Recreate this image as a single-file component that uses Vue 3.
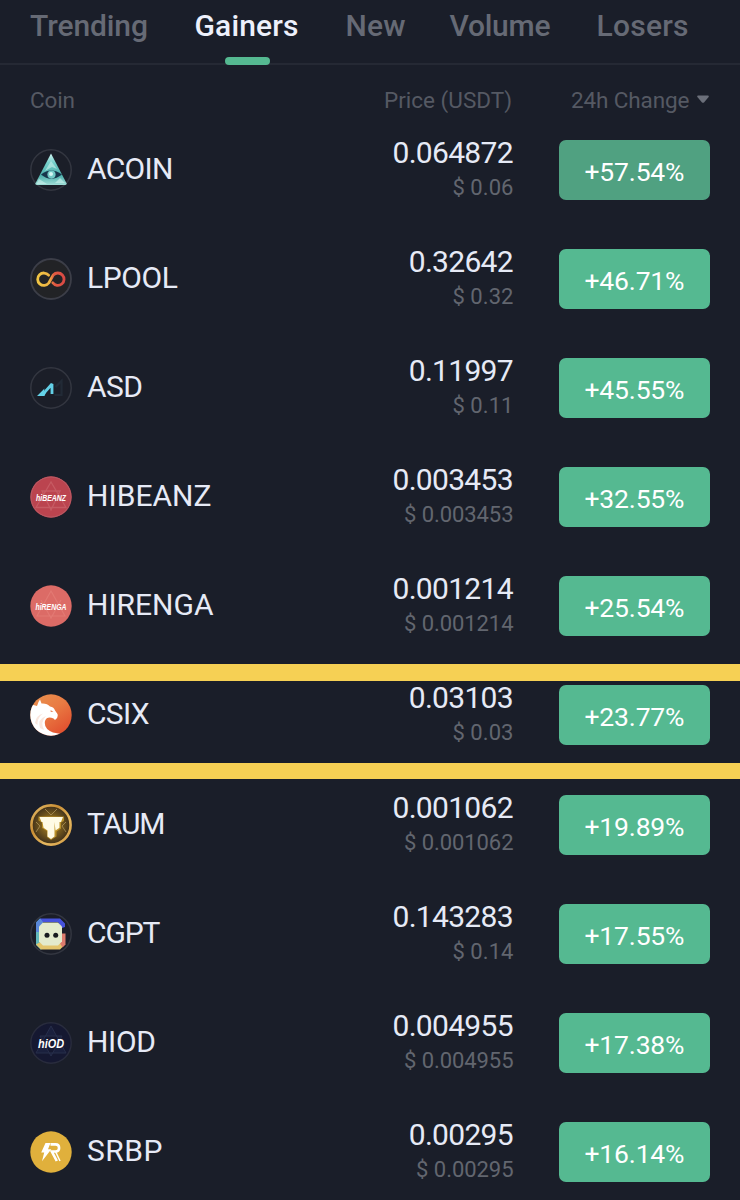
<script setup>
// Spreads the letters of an element so that its text spans the given width.
const vFit = {
  mounted(el, { value }) {
    const count = el.textContent.trim().length
    const natural = el.getBoundingClientRect().width
    const spacing = (value - natural) / (count - 1)
    el.style.letterSpacing = `${spacing}px`
    el.style.marginRight = `${-spacing}px`
  },
}

const tabs = [
  { label: 'Trending', width: 118 },
  { label: 'Gainers', width: 104, active: true },
  { label: 'New', width: 60 },
  { label: 'Volume', width: 101 },
  { label: 'Losers', width: 92 },
]

const coins = [
  { name: 'ACOIN', width: 86.5, price: '0.064872', usd: '$ 0.06', change: '+57.54%', pressed: true },
  { name: 'LPOOL', width: 91, price: '0.32642', usd: '$ 0.32', change: '+46.71%' },
  { name: 'ASD', width: 56, price: '0.11997', usd: '$ 0.11', change: '+45.55%' },
  { name: 'HIBEANZ', width: 124.5, price: '0.003453', usd: '$ 0.003453', change: '+32.55%' },
  { name: 'HIRENGA', width: 126.5, price: '0.001214', usd: '$ 0.001214', change: '+25.54%' },
  { name: 'CSIX', width: 62.5, price: '0.03103', usd: '$ 0.03', change: '+23.77%', marked: true },
  { name: 'TAUM', width: 78.5, price: '0.001062', usd: '$ 0.001062', change: '+19.89%' },
  { name: 'CGPT', width: 73.5, price: '0.143283', usd: '$ 0.14', change: '+17.55%' },
  { name: 'HIOD', width: 69, price: '0.004955', usd: '$ 0.004955', change: '+17.38%' },
  { name: 'SRBP', width: 75.5, price: '0.00295', usd: '$ 0.00295', change: '+16.14%' },
]

const priceWidth = (t) => 121 - (8 - t.length) * 16.3
const usdWidth = (t) => 109.5 - (10 - t.length) * 12.1
</script>

<template>
  <main class="market">
    <nav class="tabs">
      <a v-for="t in tabs" :key="t.label" class="tab" :class="{ active: t.active }">
        <span v-fit="t.width">{{ t.label }}</span>
      </a>
    </nav>
    <header class="columns">
      <div class="col-coin"><span v-fit="45">Coin</span></div>
      <div class="col-price"><span v-fit="128">Price (USDT)</span></div>
      <div class="col-change">
        <span v-fit="118.5">24h Change</span>
        <svg class="caret" width="14" height="9" viewBox="0 0 14 9"><path d="M2 .5h10q1.5.3.6 1.5L8 7.4q-1 .9-2 0L1.4 2Q.5.8 2 .5z" fill="#6b6f7a" /></svg>
      </div>
    </header>

    <section class="list">
      <div v-for="c in coins" :key="c.name" class="row" :class="{ marked: c.marked }">
        <svg class="icon" viewBox="0 0 42 42">
          <template v-if="c.name === 'ACOIN'">
            <defs><linearGradient id="ac" x1="0" y1="0" x2="0" y2="1"><stop offset="0" stop-color="#d2f4f1" /><stop offset=".3" stop-color="#75cfca" /><stop offset=".7" stop-color="#4cafaa" /><stop offset="1" stop-color="#a1ded7" /></linearGradient></defs>
            <circle cx="21" cy="21" r="20.2" fill="#1b1e28" stroke="#333640" stroke-width="1.5" />
            <path d="M21 4.5 36.5 34.3q.5 1.7-1.3 1.7H6.8q-1.8 0-1.3-1.7z" fill="url(#ac)" />
            <path d="M21 12 27 20 22 18 15 22zM9 30l8 5H6.5zM35 34H25l5-5z" fill="#d6f5f0" opacity=".55" />
            <path d="M11 25.5Q21 17.5 32 25.5 21 34 11 25.5z" fill="#17364b" />
            <circle cx="21.5" cy="25.6" r="4.1" fill="#72c8c5" /><circle cx="21" cy="25" r="2" fill="#d4f5f2" />
          </template>
          <template v-else-if="c.name === 'LPOOL'">
            <defs><linearGradient id="lp" gradientUnits="userSpaceOnUse" x1="7" y1="0" x2="35" y2="0"><stop offset="0" stop-color="#f1c644" /><stop offset=".45" stop-color="#eeb344" /><stop offset=".6" stop-color="#e25b42" /><stop offset="1" stop-color="#da4844" /></linearGradient></defs>
            <circle cx="21" cy="21" r="20" fill="#222326" stroke="#3c3e48" stroke-width="1.8" />
            <path d="M18.6 17.2A6.2 6.2 0 1 0 18.8 25L23.3 17A6.2 6.2 0 1 1 22.8 24.8" fill="none" stroke="url(#lp)" stroke-width="2.8" stroke-linecap="round" stroke-linejoin="round" />
          </template>
          <template v-else-if="c.name === 'ASD'">
            <circle cx="21" cy="21" r="20.2" fill="#1b1e28" stroke="#333640" stroke-width="1.5" />
            <path d="M25.5 20 31.5 14v14h-7" fill="none" stroke="#222a36" stroke-width="2.2" />
            <path d="M22 27V17L14 26" fill="none" stroke="#62cfe6" stroke-width="2.8" stroke-linejoin="bevel" />
            <path d="M7 29 14.5 21.5 13.8 25h2.4L14.5 29z" fill="#65d3e9" />
          </template>
          <template v-else-if="c.name === 'HIBEANZ'">
            <circle cx="21" cy="21" r="20.7" fill="#bb444f" />
            <g fill="none" stroke="#d17178" stroke-width="1.3"><path d="M21 6 6 31.5h30zM12 15l18 0L21 34z" opacity=".5" /></g>
            <circle cx="21" cy="21" r="20" fill="none" stroke="#b95b65" />
            <text x="6" y="25" class="scrawl" font-size="9.5" textLength="30" lengthAdjust="spacingAndGlyphs">hiBEANZ</text>
          </template>
          <template v-else-if="c.name === 'HIRENGA'">
            <circle cx="21" cy="21" r="20.7" fill="#dc6b66" />
            <path d="M21 6 7 31h28zM11 15l10 18 10-18" fill="none" stroke="#e98780" stroke-width="1.2" opacity=".5" />
            <text x="5.5" y="25.2" class="scrawl" font-size="9.5" textLength="31" lengthAdjust="spacingAndGlyphs">hiRENGA</text>
          </template>
          <template v-else-if="c.name === 'CSIX'">
            <defs>
              <linearGradient id="cs" x1="0" y1="0" x2=".7" y2="1"><stop offset="0" stop-color="#e99350" /><stop offset=".5" stop-color="#e97b43" /><stop offset="1" stop-color="#e1502f" /></linearGradient>
              <clipPath id="csclip"><circle cx="21" cy="21" r="20.7" /></clipPath>
            </defs>
            <circle cx="21" cy="21" r="20.7" fill="url(#cs)" />
            <g clip-path="url(#csclip)">
              <path d="M0 10 7 12Q8 8 10 5.5L11.5 9.5Q17 9 20 12.5 24 13 25 16.5L27.5 20Q28.5 24 25 26L23.5 24.5Q17 21.8 15 27 13.5 35 23 38.5L31 40 22 43H0z" fill="#fff" />
              <path d="M10 34Q7 25 16 22 10 28 14 36zM5 29Q6 21 13 19.5 7 24 7.5 31z" fill="#f8ddd0" opacity=".7" />
              <path d="M20.5 16.2l3 1.2-2.7.5z" fill="#e47b4b" />
            </g>
          </template>
          <template v-else-if="c.name === 'TAUM'">
            <defs>
              <linearGradient id="ta" x1="0" y1="0" x2="1" y2="1"><stop offset="0" stop-color="#e5bd6b" /><stop offset=".35" stop-color="#c98e34" /><stop offset=".65" stop-color="#e7b960" /><stop offset="1" stop-color="#d39b43" /></linearGradient>
              <radialGradient id="tb"><stop offset="0" stop-color="#b58a22" /><stop offset="1" stop-color="#3d2e19" /></radialGradient>
            </defs>
            <circle cx="21" cy="21" r="19.6" fill="url(#tb)" stroke="url(#ta)" stroke-width="2.6" />
            <path d="M15 5l6 6 6-6M6 18l4 4-4 6M36 18l-4 4 4 6" fill="none" stroke="#a48a54" stroke-width=".9" />
            <path d="M8.5 12.5h25.5v4.5l-3 1.5v6l-4.5 3v5L21 36l-4-3v-6l-5-3v-5.500l-3.500-2z" fill="#d5a62d" opacity=".7" />
            <path d="M9.500 13H33l-2 5h-6.500V32.500L21 35l-3.500-2.500V18h-6zM12.500 18h5v8.500l-4-2.700zM24.500 18h5v5.800l-4 2.700z" fill="#fffbe5" />
          </template>
          <template v-else-if="c.name === 'CGPT'">
            <circle cx="21" cy="21" r="20.2" fill="#1b1e28" stroke="#333640" stroke-width="1.5" />
            <path d="M10 5.500h20l5 5V14l-3 1-4-6H10z" fill="#4652dc" />
            <path d="M10 5.500 6 9.500V32l5 5 2-6V10z" fill="#62b9bb" /><path d="M10 5.500 13 9 10 19H6V9.500z" fill="#5987d9" />
            <path d="M6 31.500l5 5h19l5-5-3-3H11z" fill="#e3c56c" /><path d="M32 20.500h3.500v11l-3 3-3-5z" fill="#dd7b6d" />
            <path d="M13 9.500h15l4 4V28.500l-4 4H13l-4-4V13.500z" fill="#e3ebcd" />
            <circle cx="17" cy="22.200" r="2.500" fill="#161a1e" /><circle cx="25.700" cy="22.200" r="2.500" fill="#161a1e" />
          </template>
          <template v-else-if="c.name === 'HIOD'">
            <circle cx="21" cy="21" r="20.2" fill="#151831" stroke="#292c3d" stroke-width="1.4" />
            <path d="M21 4 6 31h30zM10 14h22L21 34z" fill="#20284a" fill-opacity=".5" stroke="#272e4a" />
            <text x="8" y="25.5" class="scrawl" font-size="12.5" textLength="26" lengthAdjust="spacingAndGlyphs">hiOD</text>
          </template>
          <template v-else>
            <circle cx="21" cy="21" r="20.700" fill="#e0b03c" />
            <path d="M15.500 12H20.500l-2.500 6.200h3.300L12 30.300l2.200-8.800h-3z" fill="#fff" />
            <path d="M20.500 13.400h5q3.600 0 3.600 3.500t-3.600 3.600h-3.700l5 9.500" fill="none" stroke="#fff" stroke-width="2.600" />
            <path d="M25.500 20.500l4.500 9.500" stroke="#fff" stroke-width="1.500" />
          </template>
        </svg>
        <div class="name"><span v-fit="c.width">{{ c.name }}</span></div>
        <div class="quote">
          <div class="price"><span v-fit="priceWidth(c.price)">{{ c.price }}</span></div>
          <div class="usd"><span v-fit="usdWidth(c.usd)">{{ c.usd }}</span></div>
        </div>
        <div class="badge" :class="{ pressed: c.pressed }"><span v-fit="100">{{ c.change }}</span></div>
      </div>
    </section>
  </main>
</template>

<style>
body { background: #1a1e29; }
</style>

<style scoped>
.market {
  width: 740px;
  height: 1200px;
  overflow: hidden;
  background: #1a1e29;
  color: #e6eaf6;
  font-family: Roboto, "Liberation Sans", sans-serif;
}
.market span { display: inline-block; white-space: nowrap; }
.tabs {
  box-sizing: border-box;
  height: 65px;
  padding: 6px 0 0 30px;
  display: grid;
  grid-template-columns: 164.5px 151px 104px 147px 92px;
  border-bottom: 2px solid #252934;
  font-size: 30px;
  line-height: 40px;
  font-weight: 500;
  color: #666a75;
}
.tab { position: relative; justify-self: start; }
.active { color: #edf0fb; }
.active::after {
  content: "";
  position: absolute;
  left: 30.5px;
  top: 51px;
  width: 45px;
  height: 8px;
  border-radius: 4px;
  background: #55b991;
}
.columns {
  height: 50.4px;
  padding: 0 30px;
  display: flex;
  font-size: 22.5px;
  line-height: 71px;
  color: #555963;
}
.col-coin { flex: 1; }
.col-price { width: 160px; text-align: right; margin-right: 59px; }
.col-change { width: 139px; display: flex; }
.caret { margin: 30px 0 0 6px; flex: none; }
.row {
  position: relative;
  box-sizing: border-box;
  height: 109.1px;
  padding: 0 30px 0 29.5px;
  display: flex;
  align-items: center;
}
.marked::before, .marked::after {
  content: "";
  position: absolute;
  left: 0;
  right: 0;
  height: 16.5px;
  background: #f6d054;
}
.marked::before { top: 3.4px; }
.marked::after { top: 102px; }
.icon { width: 42px; height: 42px; flex: none; }
.name { flex: 1; margin: -2px 0 0 15.5px; font-size: 30px; line-height: 40px; }
.quote { text-align: right; margin-right: 45.5px; }
.price { font-size: 30px; line-height: 36px; }
.usd { font-size: 22px; line-height: 34px; color: #62666f; }
.badge {
  width: 151px;
  height: 60px;
  flex: none;
  box-sizing: border-box;
  padding-top: 3px;
  border-radius: 7px;
  background: #55b991;
  color: #fff;
  text-align: center;
  font-size: 26.5px;
  line-height: 58px;
}
.pressed { background: #50a181; }
.scrawl {
  font-family: "Liberation Sans", sans-serif;
  font-weight: bold;
  font-style: italic;
  fill: #fff;
}
</style>
